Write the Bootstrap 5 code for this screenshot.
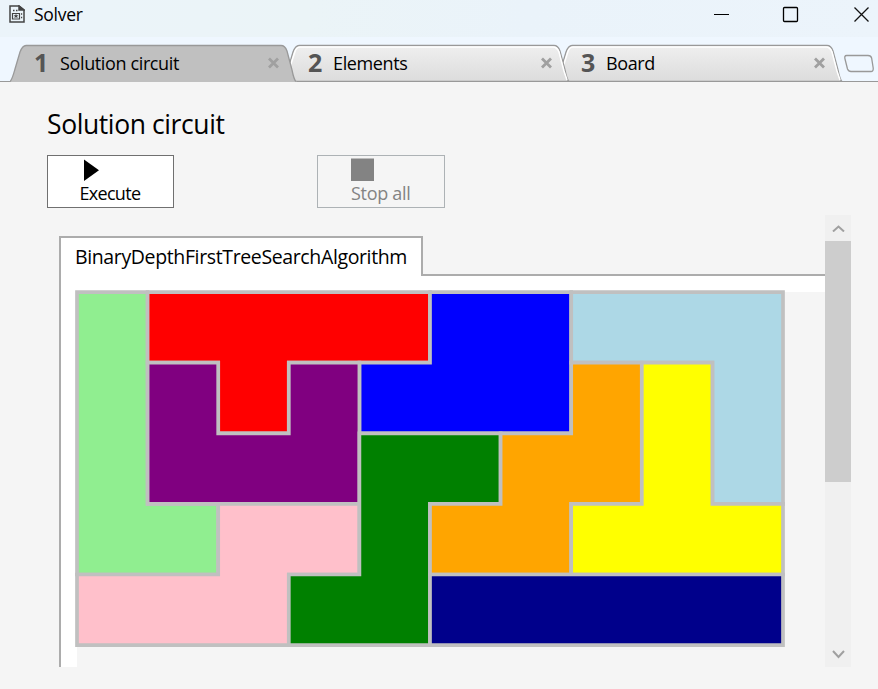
<!DOCTYPE html>
<html lang="en">
<head>
<meta charset="utf-8">
<meta name="viewport" content="width=device-width, initial-scale=1">
<title>Solver</title>
<link href="https://cdn.jsdelivr.net/npm/bootstrap@5.3.0/dist/css/bootstrap.min.css" rel="stylesheet">
<style>
body{font-family:"Open Sans","Noto Sans",sans-serif;background:#f5f5f5;color:#000;height:689px;line-height:1}
svg{display:block}
.title-bar{height:37px;background:linear-gradient(100deg,#ebf4fa,#ebf4f7 35%,#eaf3fa 60%,#ecf4fb)}
.app-icon{margin:5px 0 0 9px}
.title-text{font-size:17.5px;letter-spacing:-.25px;margin:6px 0 0 9px}
.win-controls{margin:6px 8px 0 0;gap:53px}
.win-controls svg:nth-child(2){margin:0 1px 0 -1px}
.tab-strip{height:45px;background:#eff7ff;border-bottom:1px solid #999;padding-left:10px}
.doc-tab{width:287px;height:38px;margin-right:-14px;margin-bottom:-1px}
.doc-tab.active{z-index:3}
.doc-tab.second{z-index:2}
.tab-shape{position:absolute;inset:0}
.tab-face{height:38px;padding:0 17px 0 24px}
.tab-num{font:bold 25px "Noto Sans","Open Sans",sans-serif;line-height:1;color:#555;width:26px;padding-bottom:2px}
.doc-tab+.doc-tab .tab-num{margin-left:1px;width:25px}
.tab-label{font-size:18px;letter-spacing:-.37px}
.new-tab{margin:0 0 8px 15px}
.page-title{font-size:26.5px;letter-spacing:-.4px;line-height:30px;margin:27px 0 0 47px}
.actions{margin:16px 0 0 47px;gap:143px}
.action{width:127px;height:53px;border:1px solid #707070;background:#fff;border-radius:0;padding:0;font-size:18px;letter-spacing:-.7px;line-height:24px;color:#000}
.action:disabled{width:128px;background:#f5f5f5;border-color:#adb2b5;color:#838383;opacity:1;letter-spacing:-.3px}
.action-face{width:62px}
.action:disabled .action-face{padding-left:1px}
.action:disabled svg{margin-left:-1px}
.result-area{margin:7px 0 0 59px;width:792px;height:452px}
.result-view{width:766px;padding-top:21px}
.result-tab{width:364px;height:40px;border:2px solid #acacac;border-bottom:0;background:#fff;font-size:19.5px;letter-spacing:-.37px;padding:9px 0 0 14px;line-height:19px;white-space:nowrap}
.tab-rest{border-bottom:2px solid #acacac}
.result-page{height:391px;border-left:2px solid #acacac;background:#fff;padding:16px 0 0 16px}
.canvas-area{background:#f5f5f5;height:375px}
.board{margin:-2px 0 0 -2px}
.scroll-track{width:26px;background:#f0f0f0;padding:10px 0 8px}
.scroll-thumb{height:241px;margin-top:9px;background:#cdcdcd}
</style>
</head>
<body class="overflow-hidden">
<header class="title-bar d-flex align-items-start">
  <svg class="app-icon" width="16" height="18" viewBox="0 0 16 18" fill="none" stroke="#444" stroke-width="1.5"><path d="M1 1h9l5 4v12H1z"/><path d="M10 1v4h5z" fill="#444"/><path d="M3.500 8.500h7v5.500h-7z" stroke-width="1.200"/><path d="m7 8.800.7 1.500h1.600L8.100 11.400l.6 1.700L7 12.200l-1.700.9.600-1.700-1.200-1.100h1.600z" fill="#444" stroke="none"/><path d="M4 5.500h1.500M7 5.500h1.500M12 9h1.200M12 12.500h1.200"/></svg>
  <span class="title-text">Solver</span>
  <div class="win-controls d-flex ms-auto">
    <svg width="17" height="17"><path d="M1 8.500h15" stroke="#000"/></svg>
    <svg width="17" height="17" fill="none" stroke="#000" stroke-width="1.300"><rect x="1.500" y="1.500" width="14" height="14" rx="1"/></svg>
    <svg width="17" height="17"><path d="m1.500 1.500 14 14m0-14-14 14" stroke="#111" stroke-width="1.300"/></svg>
  </div>
</header>

<svg width="0" height="0" class="position-absolute"><defs>
  <linearGradient id="tabFill" x2="0" y2="1"><stop stop-color="#efefef"/><stop offset="1" stop-color="#dcdcdc"/></linearGradient>
</defs></svg>
<nav class="tab-strip d-flex align-items-end">
  <div class="doc-tab active position-relative flex-shrink-0">
    <svg class="tab-shape" width="287" height="38"><path d="M0 38C2 36 3 32 5 25L10 8Q12.500 1.500 16 1.500H271Q275 1.500 277 7L282 26Q284 36 287 38Z" fill="#c0c0c0"/><path d="M0 37.500C2 36 3 32 5 25L10 8Q12.500 1.500 16 1.500H271Q275 1.500 277 7L282 26Q284 36 286 37.500" fill="none" stroke="#999" stroke-width="1.300"/></svg>
    <div class="tab-face position-relative d-flex align-items-center"><span class="tab-num">1</span><span class="tab-label">Solution circuit</span>
      <svg class="ms-auto" width="13" height="13"><path d="m2 1.500 9 9m0-9-9 9" stroke="#a0a0a0" stroke-width="2.800"/></svg></div>
  </div>
  <div class="doc-tab second position-relative flex-shrink-0">
    <svg class="tab-shape" width="287" height="38"><path d="M0 37.500C2 36 3 32 5 25L10 8Q12.500 1.500 16 1.500H271Q275 1.500 277 7L282 26Q284 36 286 37.500Z" fill="url(#tabFill)" stroke="#999" stroke-width="1.300"/><path d="M5 29 11.500 9Q13 3 17 3H270Q274 3 276 8L281 27L284 36" fill="none" stroke="#fff" stroke-width="1.500"/></svg>
    <div class="tab-face position-relative d-flex align-items-center"><span class="tab-num">2</span><span class="tab-label">Elements</span>
      <svg class="ms-auto" width="13" height="13"><path d="m2 1.500 9 9m0-9-9 9" stroke="#a0a0a0" stroke-width="2.800"/></svg></div>
  </div>
  <div class="doc-tab position-relative flex-shrink-0">
    <svg class="tab-shape" width="287" height="38"><path d="M0 37.500C2 36 3 32 5 25L10 8Q12.500 1.500 16 1.500H271Q275 1.500 277 7L282 26Q284 36 286 37.500Z" fill="url(#tabFill)" stroke="#999" stroke-width="1.300"/><path d="M5 29 11.500 9Q13 3 17 3H270Q274 3 276 8L281 27L284 36" fill="none" stroke="#fff" stroke-width="1.500"/></svg>
    <div class="tab-face position-relative d-flex align-items-center"><span class="tab-num">3</span><span class="tab-label">Board</span>
      <svg class="ms-auto" width="13" height="13"><path d="m2 1.500 9 9m0-9-9 9" stroke="#a0a0a0" stroke-width="2.800"/></svg></div>
  </div>
  <svg class="new-tab flex-shrink-0" width="31" height="19"><path d="M2.500 1.500H24Q27 1.500 27.600 4L29.200 14Q29.500 17.500 27 17.500H7Q4.500 17.500 3.500 15L1 5Q.2 1.500 2.500 1.500Z" fill="#eff7ff" stroke="#999" stroke-width="1.300"/></svg>
</nav>

<main>
  <h1 class="page-title fw-normal">Solution circuit</h1>
  <div class="actions d-flex">
    <button class="action btn d-flex justify-content-center text-start"><span class="action-face d-block"><svg width="24" height="25"><path d="M4 3.500v21.500l15-10.700z"/></svg>Execute</span></button>
    <button class="action btn d-flex justify-content-center text-start" disabled><span class="action-face d-block"><svg width="24" height="25"><path d="M1 2.500h23v22.500H1z" fill="#838383"/></svg>Stop all</span></button>
  </div>
  <div class="result-area d-flex">
    <section class="result-view overflow-hidden">
      <div class="d-flex"><div class="result-tab flex-shrink-0">BinaryDepthFirstTreeSearchAlgorithm</div><div class="tab-rest flex-grow-1"></div></div>
      <div class="result-page"><div class="canvas-area d-flex align-items-start">
        <svg class="board" width="712" height="358" viewBox="-2 -2 712 358" stroke="#c0c0c0" stroke-width="3.700">
          <g transform="translate(0 .1)">
            <path fill="#90ee90" d="M0 0H70.600V211.800H141.200V282.400H0Z"/>
            <path fill="#f00" d="M70.600 0H353V70.600H211.800V141.200H141.200V70.600H70.600Z"/>
            <path fill="#00f" d="M353 0H494.200V141.200H282.400V70.600H353Z"/>
            <path fill="#add8e6" d="M494.200 0H706V211.800H635.400V70.600H494.200Z"/>
            <path fill="#800080" d="M70.600 70.600H141.200V141.200H211.800V70.600H282.400V211.800H70.600Z"/>
            <path fill="#ffc0cb" d="M141.200 211.800H282.400V282.400H211.800V353H0V282.400H141.200Z"/>
            <path fill="#008000" d="M282.400 141.200H423.600V211.800H353V353H211.800V282.400H282.400Z"/>
            <path fill="#ffa500" d="M494.200 70.600H564.800V211.800H494.200V282.400H353V211.800H423.600V141.200H494.200Z"/>
            <path fill="#ff0" d="M564.800 70.600H635.400V211.800H706V282.400H494.200V211.800H564.800Z"/>
            <path fill="#00008b" d="M353 282.400H706V353H353Z"/>
          </g>
        </svg>
      </div></div>
    </section>
    <div class="scroll-track d-flex flex-column">
      <svg class="flex-shrink-0" width="26" height="7"><path d="m8 6.500 5.500-5 5.500 5" fill="none" stroke="#a0a0a0" stroke-width="2"/></svg>
      <div class="scroll-thumb flex-shrink-0"></div>
      <svg class="mt-auto" width="26" height="9"><path d="m8 1 5.500 6L19 1" fill="none" stroke="#a0a0a0" stroke-width="2"/></svg>
    </div>
  </div>
</main>
<script src="https://cdn.jsdelivr.net/npm/bootstrap@5.3.0/dist/js/bootstrap.bundle.min.js"></script>
</body>
</html>
